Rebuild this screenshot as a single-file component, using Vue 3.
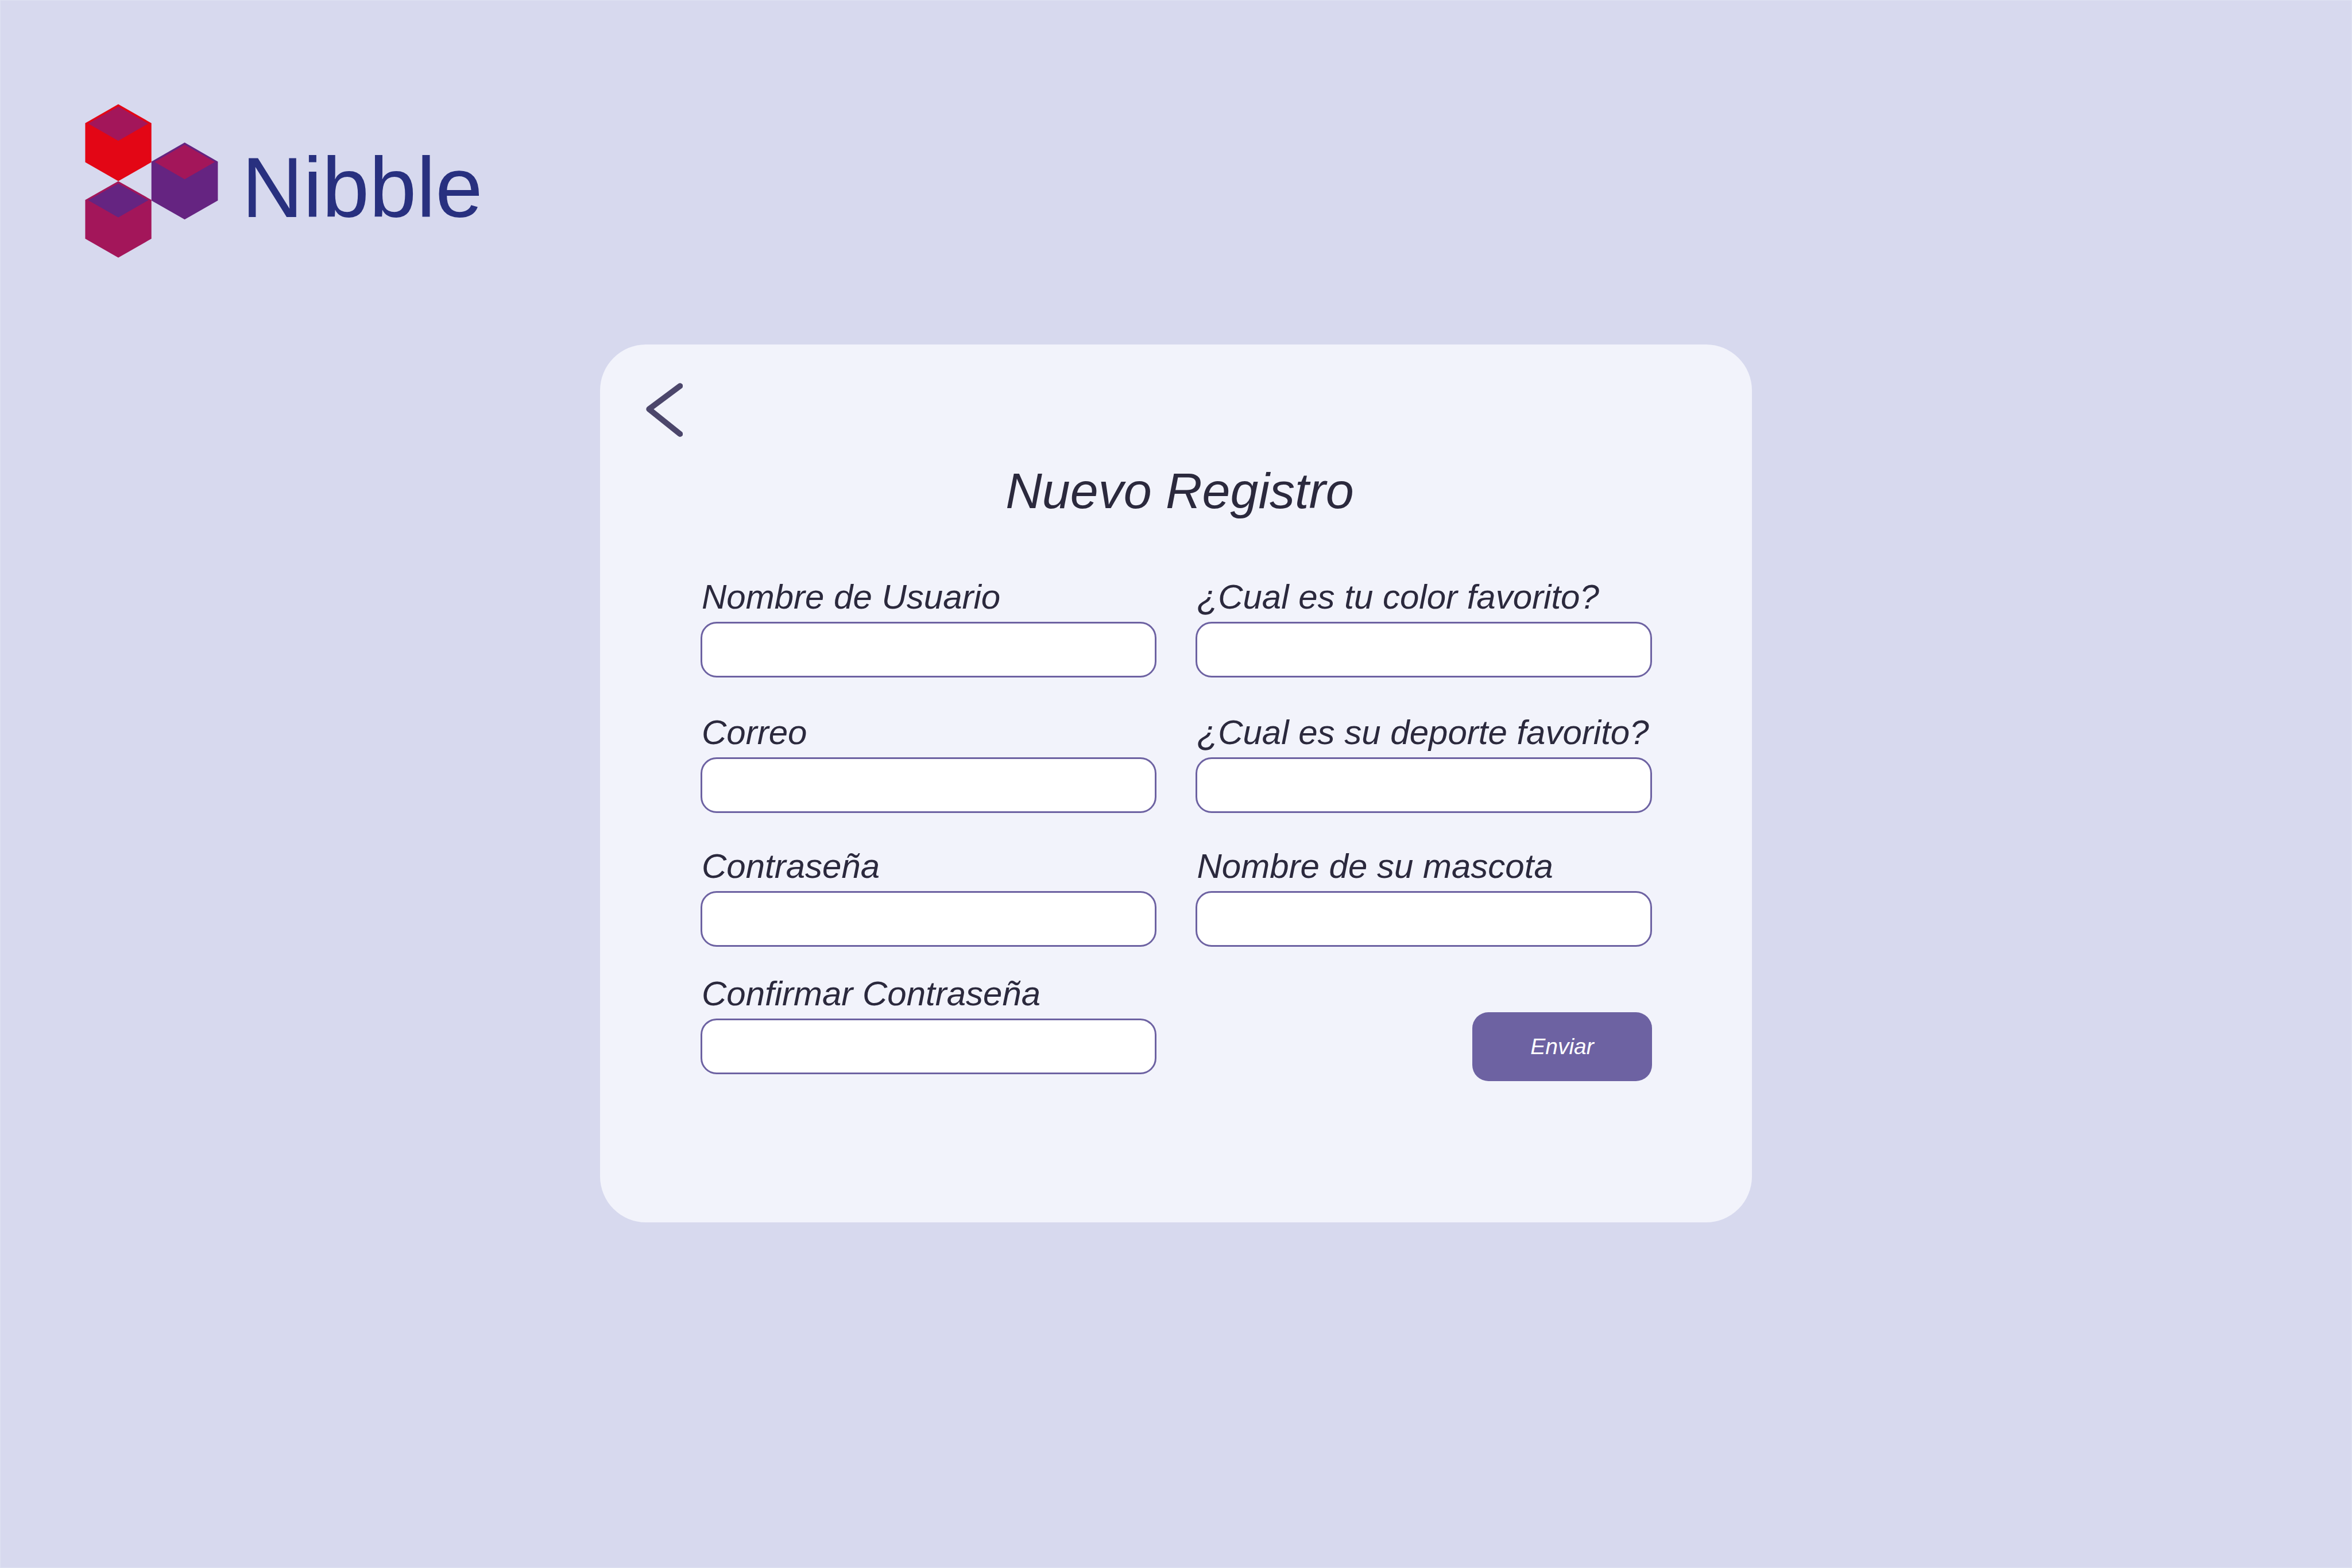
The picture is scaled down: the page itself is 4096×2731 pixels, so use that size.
<script setup>
import { reactive } from 'vue'

const fields = [
  { id: 'usuario', label: 'Nombre de Usuario', type: 'text' },
  { id: 'color', label: '¿Cual es tu color favorito?', type: 'text' },
  { id: 'correo', label: 'Correo', type: 'email' },
  { id: 'deporte', label: '¿Cual es su deporte favorito?', type: 'text' },
  { id: 'contrasena', label: 'Contraseña', type: 'password' },
  { id: 'mascota', label: 'Nombre de su mascota', type: 'text' },
  { id: 'confirmar', label: 'Confirmar Contraseña', type: 'password' },
]

const form = reactive(Object.fromEntries(fields.map((f) => [f.id, ''])))
</script>

<template>
  <div class="page">
    <header class="brand">
      <svg class="brand-mark" viewBox="0 0 232 268" aria-hidden="true">
        <path fill="#e30615" d="M58 .6 115.7 33.5v68L58 134.6.4 101.5v-68z" />
        <path fill="#a3165a" d="M58 4.5 110.3 34.3 58 64.2 5.6 34.3z" />
        <path fill="#652481" d="M173.6 67.2 231.4 100.4v67.8L173.6 201.3 115.7 168.2v-67.8z" />
        <path fill="#a3165a" d="M173.6 71 226.3 101 173.6 131.3 121.2 101z" />
        <path fill="#a3165a" d="M58 134.6 115.7 167.2v67.6L58 267.7.4 234.8v-67.6z" />
        <path fill="#652481" d="M58 138.6 110.3 167.8 58 197.8 5.6 167.8z" />
      </svg>
      <span class="brand-name">Nibble</span>
    </header>

    <main class="card">
      <button class="back" type="button" aria-label="Volver">
        <svg viewBox="0 0 64 94" aria-hidden="true">
          <path d="M59.3 5.2 5.3 45.6 59.3 88.9" />
        </svg>
      </button>

      <div class="body">
        <h1 class="title">Nuevo Registro</h1>
        <form class="form" @submit.prevent>
          <div v-for="field in fields" :key="field.id" class="field">
            <label :for="field.id">{{ field.label }}</label>
            <input :id="field.id" v-model="form[field.id]" :type="field.type" />
          </div>
          <button class="submit" type="submit">Enviar</button>
        </form>
      </div>
    </main>
  </div>
</template>

<style>
body {
  margin: 0;
  background: #d7d9ee;
}
</style>

<style scoped>
.page {
  box-sizing: border-box;
  min-height: 100vh;
  border: 1px solid #dfe2f2;
  background: #d7d9ee;
  color: #2b293d;
  font-family: "Liberation Sans", Arial, sans-serif;
}

.brand {
  display: flex;
  align-items: center;
  gap: 41px;
  padding: 180px 147px 0;
}

.brand-mark {
  flex: none;
  width: 232px;
  height: 268px;
}

.brand-name {
  padding-top: 24px;
  color: #28307f;
  font-size: 148px;
  line-height: 150px;
}

.card {
  box-sizing: border-box;
  width: 49%;
  margin: 151px auto 0;
  padding: 67px 0 246px;
  border-radius: 80px;
  background: #f2f3fb;
}

.back {
  display: block;
  margin-left: 80px;
  padding: 0;
  border: 0;
  background: none;
  cursor: pointer;
}

.back svg {
  display: block;
  width: 64px;
  height: 94px;
  fill: none;
  stroke: #4c466b;
  stroke-width: 10;
  stroke-linecap: round;
  stroke-linejoin: round;
}

.body {
  padding: 44px 174px 0 175px;
}

.title {
  margin: 0 0 101px;
  padding-left: 12px;
  font-size: 88px;
  font-style: italic;
  font-weight: 400;
  line-height: 100px;
  text-align: center;
}

.form {
  display: grid;
  grid-template-columns: 1fr 1fr;
  grid-template-rows: 188px 185px 174px 186px;
  gap: 48px 68px;
}

.field {
  display: flex;
  flex-direction: column;
  gap: 9px;
}

.field label {
  padding-left: 2px;
  font-size: 60px;
  font-style: italic;
  line-height: 68px;
  white-space: nowrap;
}

.field input {
  box-sizing: border-box;
  width: 100%;
  height: 97px;
  padding: 0 28px;
  border: 3px solid #6d62a2;
  border-radius: 28px;
  background: #fff;
  color: inherit;
  font: inherit;
  font-size: 48px;
  outline: none;
}

.submit {
  align-self: end;
  justify-self: end;
  width: 313px;
  height: 120px;
  padding: 0;
  border: 0;
  border-radius: 28px;
  background: #6d62a2;
  color: #fff;
  font-family: inherit;
  font-size: 39px;
  font-style: italic;
  cursor: pointer;
}
</style>
